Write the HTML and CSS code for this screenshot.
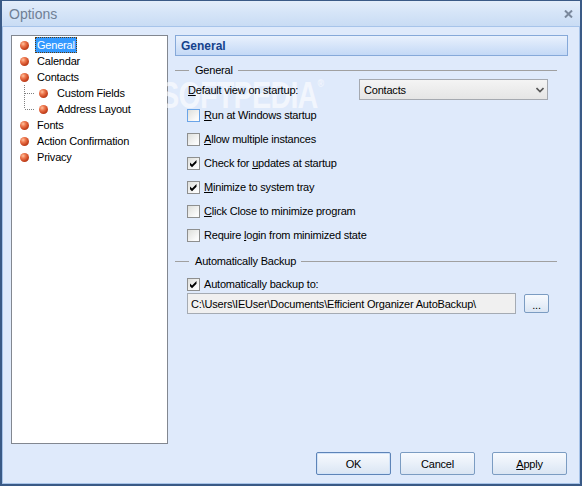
FILE: index.html
```html
<!DOCTYPE html>
<html>
<head>
<meta charset="utf-8">
<link rel="stylesheet" href="styles.css">
</head>
<body>
<div class="window">
  <div class="titlebar">
    <span class="title">Options</span>
    <svg class="close" width="9" height="8" viewBox="0 0 9 8"><path d="M1 0.5 L8 7.5 M8 0.5 L1 7.5" stroke="#7a889c" stroke-width="2"/></svg>
  </div>
  <div class="client">
    <div class="main">
      <div class="tree">
        <div class="node"><span class="bullet"></span><span class="label selected">General</span></div>
        <div class="node"><span class="bullet"></span><span class="label">Calendar</span></div>
        <div class="node"><span class="bullet"></span><span class="label">Contacts</span></div>
        <div class="node child">
          <svg class="conn" width="15" height="16" viewBox="0 0 15 16"><path d="M0.5 0 V16 M1 8.5 H11" stroke="#808080" stroke-width="1" stroke-dasharray="1 1" fill="none"/></svg>
          <span class="bullet"></span><span class="label">Custom Fields</span>
        </div>
        <div class="node child">
          <svg class="conn" width="15" height="16" viewBox="0 0 15 16"><path d="M0.5 0 V8 M1 8.5 H11" stroke="#808080" stroke-width="1" stroke-dasharray="1 1" fill="none"/></svg>
          <span class="bullet"></span><span class="label">Address Layout</span>
        </div>
        <div class="node"><span class="bullet"></span><span class="label">Fonts</span></div>
        <div class="node"><span class="bullet"></span><span class="label">Action Confirmation</span></div>
        <div class="node"><span class="bullet"></span><span class="label">Privacy</span></div>
      </div>
      <div class="panel">
        <div class="watermark">SOFTPEDIA<sup>®</sup></div>
        <div class="header">General</div>
        <div class="group">
          <div class="legend"><span>General</span></div>
          <div class="field-row">
            <span class="field-label"><u>D</u>efault view on startup:</span>
            <div class="select"><span>Contacts</span><svg width="8" height="6" viewBox="0 0 8 6"><path d="M0.5 1 L4 4.5 L7.5 1" stroke="#555" stroke-width="1.6" fill="none"/></svg></div>
          </div>
          <div class="check first"><span class="cb hover"></span><span><u>R</u>un at Windows startup</span></div>
          <div class="check"><span class="cb"></span><span><u>A</u>llow multiple instances</span></div>
          <div class="check"><span class="cb"><svg width="11" height="11" viewBox="0 0 11 11"><polygon points="2,4.5 4,6.5 8.5,2 8.5,4.8 4,9.3 2,7.3" fill="#000"/></svg></span><span>Check for <u>u</u>pdates at startup</span></div>
          <div class="check"><span class="cb"><svg width="11" height="11" viewBox="0 0 11 11"><polygon points="2,4.5 4,6.5 8.5,2 8.5,4.8 4,9.3 2,7.3" fill="#000"/></svg></span><span><u>M</u>inimize to system tray</span></div>
          <div class="check"><span class="cb"></span><span><u>C</u>lick Close to minimize program</span></div>
          <div class="check"><span class="cb"></span><span>Require <u>l</u>ogin from minimized state</span></div>
        </div>
        <div class="group group2">
          <div class="legend"><span>Automatically Backup</span></div>
          <div class="check small"><span class="cb"><svg width="11" height="11" viewBox="0 0 11 11"><polygon points="2,4.5 4,6.5 8.5,2 8.5,4.8 4,9.3 2,7.3" fill="#000"/></svg></span><span>Automatically backup to:</span></div>
          <div class="path-row">
            <div class="textbox">C:\Users\IEUser\Documents\Efficient Organizer AutoBackup\</div>
            <div class="btn small-btn">...</div>
          </div>
        </div>
      </div>
    </div>
    <div class="buttons">
      <div class="btn default">OK</div>
      <div class="btn">Cancel</div>
      <div class="btn apply"><u>A</u>pply</div>
    </div>
  </div>
</div>
</body>
</html>
```

FILE: styles.css
```css
* { box-sizing: border-box; }
html, body { margin: 0; padding: 0; }
body {
  width: 582px;
  height: 486px;
  overflow: hidden;
  font-family: "Liberation Sans", Arial, sans-serif;
  font-size: 11px;
  letter-spacing: -0.2px;
  color: #000;
}
.window {
  width: 582px;
  height: 486px;
  border: 2px solid #3a5a86;
  border-top-width: 1px;
  background: #dfeafb;
  display: flex;
  flex-direction: column;
}
.titlebar {
  flex: none;
  height: 26px;
  background: linear-gradient(#e3edfa, #d6e5f8 45%, #c9dcf4);
  border-bottom: 1px solid #a7c4ea;
  display: flex;
  align-items: center;
  justify-content: space-between;
  padding: 0 7px 0 7px;
}
.title {
  font-size: 14px;
  letter-spacing: 0;
  color: #6f7f95;
}
.client {
  flex: 1;
  border: 1px solid #a7c3e8;
  border-top: 0;
  padding: 8px 11px 0 8px;
  display: flex;
  flex-direction: column;
}
.main {
  display: flex;
  gap: 7px;
  height: 409px;
}
.tree {
  width: 157px;
  height: 409px;
  background: #fff;
  border: 1px solid #828790;
  padding-top: 1px;
}
.node {
  display: flex;
  align-items: center;
  height: 16px;
}
.bullet {
  flex: none;
  width: 9px;
  height: 9px;
  border-radius: 50%;
  margin-left: 8px;
  background: radial-gradient(circle at 35% 32%, #ffc2a0 0, #ee7a50 28%, #c9441f 62%, #8a2a12 100%);
}
.label {
  margin-left: 6px;
  padding: 0 1px;
  height: 16px;
  line-height: 14px;
  border: 1px solid transparent;
  white-space: nowrap;
}
.label.selected {
  background: #3399ff;
  color: #fff;
  border: 1px dotted #5a3a10;
}
.child .conn {
  flex: none;
  margin-left: 12px;
}
.child .bullet { margin-left: 0; }
.child .label { margin-left: 7px; }

.panel {
  width: 393px;
  position: relative;
  display: flex;
  flex-direction: column;
}
.watermark {
  position: absolute;
  left: -15px;
  top: 40px;
  z-index: 0;
  font-size: 36px;
  font-weight: bold;
  letter-spacing: -1px;
  color: rgba(255, 255, 255, 0.6);
  transform: scaleX(0.8);
  transform-origin: left top;
  white-space: nowrap;
}
.watermark sup {
  font-size: 11px;
  vertical-align: top;
  position: relative;
  top: 2px;
}
.header {
  position: relative;
  z-index: 1;
  height: 21px;
  border: 1px solid #86a9d9;
  background: linear-gradient(#e9f1fd, #c4d9f6);
  color: #15428b;
  font-weight: bold;
  font-size: 12px;
  letter-spacing: 0;
  padding-left: 5px;
  display: flex;
  align-items: center;
}
.group {
  position: relative;
  z-index: 1;
  display: flex;
  flex-direction: column;
}
.legend {
  display: flex;
  align-items: center;
  height: 14px;
  margin-top: 7px;
  margin-right: 11px;
}
.legend::before {
  content: "";
  width: 14px;
  border-top: 1px solid #a0a0a0;
}
.legend::after {
  content: "";
  flex: 1;
  border-top: 1px solid #a0a0a0;
}
.legend span {
  padding: 0 5px 0 6px;
  white-space: nowrap;
}
.field-row {
  display: flex;
  align-items: center;
  height: 21px;
  margin-top: 2px;
  padding-left: 13px;
}
.field-label {
  width: 171px;
}
.select {
  width: 189px;
  height: 21px;
  border: 1px solid #a5a9b0;
  background: linear-gradient(#f4f4f4, #e5e5e5);
  display: flex;
  align-items: center;
  justify-content: space-between;
  padding: 0 3px 0 4px;
}
.check {
  display: flex;
  align-items: center;
  height: 24px;
  padding-left: 12px;
}
.check.first { margin-top: 3px; }
.check.small {
  height: 16px;
  margin-top: 8px;
}
.cb {
  flex: none;
  width: 13px;
  height: 13px;
  border: 1px solid #8e8f8f;
  background: linear-gradient(135deg, #dedfdb, #fbfbfb 80%);
  margin-right: 4px;
  display: flex;
}
.cb.hover { border-color: #6aa4e8; }
.group2 .legend { margin-top: 7px; }
.path-row {
  display: flex;
  align-items: center;
  margin-top: 1px;
  padding-left: 12px;
}
.textbox {
  width: 329px;
  height: 21px;
  border: 1px solid #a5abb3;
  background: #f0f0f0;
  padding-left: 3px;
  display: flex;
  align-items: center;
  white-space: nowrap;
  overflow: hidden;
}
.btn {
  width: 75px;
  height: 23px;
  border: 1px solid #7b9cc2;
  border-radius: 2px;
  background: linear-gradient(#f7fafe, #e9f0f9 50%, #dae5f3);
  display: flex;
  align-items: center;
  justify-content: center;
}
.small-btn {
  width: 25px;
  height: 19px;
  margin-left: 8px;
  align-items: flex-end;
  padding-bottom: 3px;
  line-height: 8px;
}
.buttons {
  display: flex;
  justify-content: flex-end;
  gap: 9px;
  margin-top: 8px;
  padding-right: 1px;
}
.btn.default {
  border-color: #5d84b8;
  box-shadow: inset 0 0 0 1px #d2e3f8;
}
.btn.apply { margin-left: 8px; }
```
